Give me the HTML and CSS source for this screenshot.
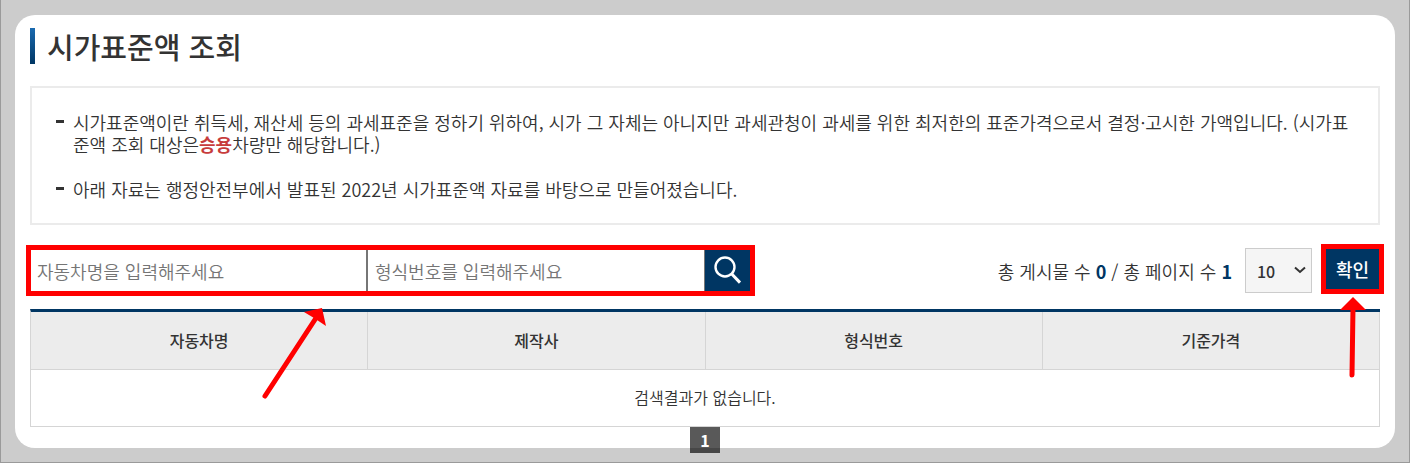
FILE: index.html
```
<!DOCTYPE html>
<html lang="ko">
<head>
  <meta charset="UTF-8" />
  <meta name="viewport" content="width=device-width, initial-scale=1.0"/>
  <title>시가표준액 조회</title>
  <link rel="stylesheet" href="styles.css">
</head>
<body>
  <main class="panel">
    <h1 class="title">시가표준액 조회</h1>

    <ul class="notice">
      <li>시가표준액이란 취득세, 재산세 등의 과세표준을 정하기 위하여, 시가 그 자체는 아니지만 과세관청이 과세를 위한 최저한의 표준가격으로서 결정·고시한 가액입니다. (시가표준액 조회 대상은<strong>승용</strong>차량만 해당합니다.)</li>
      <li>아래 자료는 행정안전부에서 발표된 2022년 시가표준액 자료를 바탕으로 만들어졌습니다.</li>
    </ul>

    <div class="toolbar">
      <form class="search">
        <input type="text" class="search-input" placeholder="자동차명을 입력해주세요" aria-label="자동차명">
        <input type="text" class="search-input" placeholder="형식번호를 입력해주세요" aria-label="형식번호">
        <button type="button" class="search-button" aria-label="검색">
          <svg width="46" height="42" viewBox="0 0 46 42" fill="none" stroke="#fff">
            <circle cx="20" cy="17" r="9.5" stroke-width="2.4"/>
            <path d="M26.8 24L35 32.6" stroke-width="3"/>
          </svg>
        </button>
      </form>

      <form class="paging">
        <span class="count">총 게시물 수 <b>0</b> / 총 페이지 수 <b>1</b></span>
        <span class="select-wrap">
          <select class="page-size" aria-label="페이지당 게시물 수">
            <option>10</option>
            <option>20</option>
            <option>30</option>
          </select>
          <svg class="chevron" width="12" height="8" viewBox="0 0 12 8" fill="none" stroke="#333" stroke-width="2">
            <path d="M1 1.5L6 6L11 1.5"/>
          </svg>
        </span>
        <span class="confirm">
          <button type="button" class="confirm-button">확인</button>
        </span>
      </form>
    </div>

    <div class="results">
      <table class="result-table">
        <thead>
          <tr>
            <th>자동차명</th>
            <th>제작사</th>
            <th>형식번호</th>
            <th>기준가격</th>
          </tr>
        </thead>
        <tbody>
          <tr>
            <td colspan="4">검색결과가 없습니다.</td>
          </tr>
        </tbody>
      </table>

      <!-- guide arrows -->
      <svg class="arrow arrow-search" width="66" height="94" viewBox="0 0 66 94">
        <path d="M5 90L56 12" stroke="red" stroke-width="5" stroke-linecap="round"/>
        <path d="M62 2L44 6L54 12L66 20Z" fill="red"/>
      </svg>
      <svg class="arrow arrow-confirm" width="26" height="82" viewBox="0 0 26 82">
        <path d="M12 78L13 10" stroke="red" stroke-width="5" stroke-linecap="round"/>
        <path d="M13 0L26 13H0Z" fill="red"/>
      </svg>
    </div>

    <nav class="pagination">
      <a href="#" class="page">1</a>
    </nav>
  </main>
</body>
</html>
```
FILE: styles.css
```
* {
  box-sizing: border-box;
}

body {
  margin: 0;
  min-height: 100vh;
  padding: 15px 14px 14px;
  border: 1px solid #9a9a9a;
  border-top: none;
  background: #ccc;
  color: #333;
  font-family: "Noto Sans CJK KR", sans-serif;
  font-size: 18px;
  font-weight: 350;
  line-height: 22px;
}

input, select, button {
  margin: 0;
  font-family: inherit;
}

.panel {
  padding: 13px 15px 21px;
  border-radius: 20px;
  background: #fff;
}

.title {
  position: relative;
  margin: 0 0 22px;
  padding-left: 17px;
  font-size: 29px;
  font-weight: 500;
  line-height: 36px;
}

.title::before {
  content: "";
  position: absolute;
  left: 0;
  top: 0;
  width: 5px;
  height: 36px;
  background: linear-gradient(#1a6ab0, #003663);
}

.notice {
  display: flex;
  flex-direction: column;
  gap: 23px;
  margin: 0 0 24px;
  padding: 23px 24px;
  border: 2px solid #ebebeb;
  list-style: none;
  word-break: break-all;
}

.notice li {
  position: relative;
  padding-left: 17px;
}

.notice li::before {
  content: "";
  position: absolute;
  left: 0;
  top: 9px;
  width: 8px;
  height: 3px;
  background: #333;
}

.notice strong {
  color: #c73c3c;
  font-weight: 700;
}

.toolbar {
  display: flex;
  justify-content: space-between;
  align-items: flex-start;
  margin-bottom: 16px;
}

.search {
  position: relative;
  display: flex;
  width: 721px;
  height: 43px;
}

.search::after,
.confirm::after {
  content: "";
  position: absolute;
  inset: -4px;
  border: 5px solid #f00;
  pointer-events: none;
}

.search-input {
  flex: 1;
  min-width: 0;
  padding: 0 7px;
  border: 0 solid #767676;
  border-right-width: 2px;
  font-size: 18px;
  font-weight: 350;
}

.search-input + .search-input {
  border-right-width: 1px;
}

.search-input::placeholder {
  color: #757575;
}

.search-button {
  width: 46px;
  padding: 0;
  border: none;
  background: #003663;
}

.search-button svg {
  display: block;
}

.paging {
  display: flex;
  align-items: center;
  gap: 13px;
  margin-top: -1px;
}

.count b {
  color: #003663;
  font-weight: 700;
}

.select-wrap {
  position: relative;
}

.page-size {
  display: block;
  width: 67px;
  height: 45px;
  padding: 0 11px;
  border: 1px solid #ccc;
  border-radius: 0;
  background: #f5f5f5;
  color: #333;
  appearance: none;
  font-size: 16px;
  font-weight: 500;
}

.chevron {
  position: absolute;
  right: 6px;
  top: 18px;
  pointer-events: none;
}

.confirm {
  position: relative;
  align-self: flex-start;
}

.confirm-button {
  display: block;
  width: 55px;
  height: 42px;
  padding: 0;
  border: none;
  background: #003663;
  color: #fff;
  font-size: 18px;
  font-weight: 500;
}

.results {
  position: relative;
}

.result-table {
  width: 100%;
  table-layout: fixed;
  border-collapse: separate;
  border-spacing: 0;
  border-top: 3px solid #003663;
  border-left: 1px solid #d5d5d5;
  font-size: 16px;
}

.result-table th,
.result-table td {
  padding: 0 0 2px;
  border-right: 1px solid #d5d5d5;
  border-bottom: 1px solid #d5d5d5;
  text-align: center;
}

.result-table th {
  height: 58px;
  background: #ececec;
  font-weight: 500;
}

.result-table td {
  height: 57px;
}

.arrow {
  position: absolute;
  pointer-events: none;
}

.arrow-search {
  left: 230px;
  top: -3px;
}

.arrow-confirm {
  right: 14px;
  top: -12px;
}

.pagination {
  display: flex;
  justify-content: center;
  margin-bottom: -26px;
}

.page {
  width: 30px;
  height: 26px;
  background: rgba(0, 0, 0, 0.65);
  color: #fff;
  font-size: 16px;
  font-weight: 700;
  line-height: 26px;
  text-align: center;
  text-decoration: none;
}
```
